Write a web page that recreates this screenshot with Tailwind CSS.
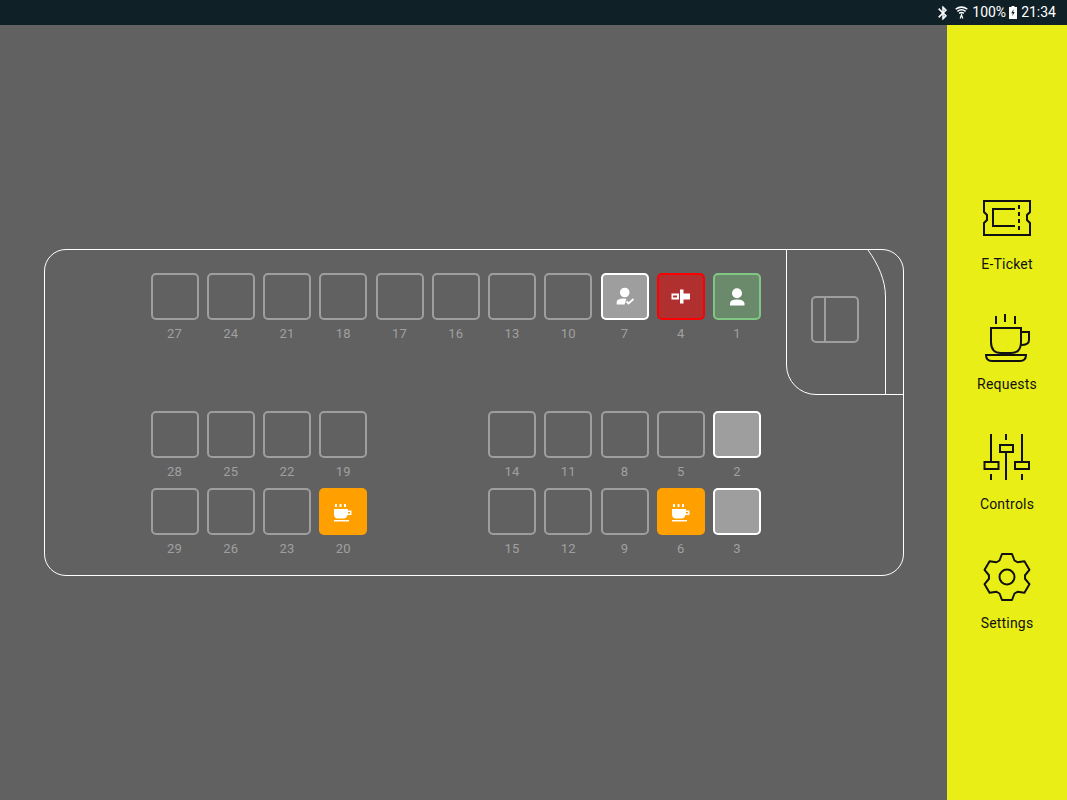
<!DOCTYPE html>
<html lang="en">
<head>
    <meta charset="UTF-8">
    <title>Coach seats</title>
    <script src="https://cdn.jsdelivr.net/npm/@tailwindcss/browser@4"></script>
</head>
<body class="bg-[#616161] font-['Roboto',sans-serif] overflow-hidden">
    <div class="flex flex-col w-[1067px] h-[800px]">
        <!-- Status bar -->
        <div class="h-[25px] bg-[#102027] flex items-center justify-end text-white text-[14px] pr-[11px]">
            <svg class="w-4 h-4 mr-[4px]" viewBox="0 0 24 24" fill="#fff" stroke="#fff" stroke-width="0.6"><path d="M17.71 7.71L12 2h-1v7.59L6.41 5 5 6.41 10.59 12 5 17.59 6.41 19 11 14.41V22h1l5.71-5.71-4.3-4.29 4.3-4.29zM13 5.83l1.88 1.88L13 9.59V5.83zm1.88 10.46L13 18.17v-3.76l1.88 1.88z"/></svg>
            <svg class="w-[13px] h-[13px] mr-[4px]" viewBox="0 0 13 13" fill="none" stroke="#fff" stroke-width="1.6"><path d="M0.7 3.2Q6.5 -1 12.3 3.2"/><path d="M2.4 5.4Q6.5 2.2 10.6 5.4"/><path d="M4.1 7.4Q6.5 5.6 8.9 7.4"/><path d="M5.2 12.5L6.5 8.8L7.8 12.5" stroke-width="1.2"/></svg>
            <span class="mr-[3px]">100%</span>
            <svg class="w-2 h-[13px] mr-[4px]" viewBox="0 0 8 13"><path fill="#fff" d="M2.5 0h3v1H8v12H0V1h2.5z"/><path fill="#102027" d="M4.6 3L2.3 7.3h1.5L3.3 10.3l2.4-4.3H4.2z"/></svg>
            <span>21:34</span>
        </div>

        <div class="flex flex-1 min-h-0">
            <!-- Coach -->
            <div class="flex-1 flex items-center justify-center">
                <div class="relative w-[860px] h-[327px] border border-white rounded-[22px] pt-[23px] pl-[106px]">
                    <div id="seats" class="grid grid-cols-[repeat(11,48px)] grid-rows-[138px_77px_auto] gap-x-[8.25px]"></div>
                    <svg class="absolute top-0 right-0 w-[117px] h-[146px]" viewBox="0 0 117 146" fill="none">
                        <path d="M0.5 0V115A29.5 29.5 0 0 0 30 144.5H117" stroke="#fff"/>
                        <path d="M99.5 144.5V47C99.5 30 92 14 82 0" stroke="#fff"/>
                        <rect x="26" y="47" width="46" height="45" rx="4" stroke="#9e9e9e" stroke-width="2"/>
                        <path d="M39 47V92" stroke="#9e9e9e" stroke-width="2"/>
                    </svg>
                </div>
            </div>

            <!-- Side menu -->
            <div class="w-[120px] bg-[#e9ef16] pt-[169px] text-[14px] leading-5 tracking-[0.2px] text-[#111]">
                <div class="h-[120px] flex flex-col items-center">
                    <svg class="w-12 h-12 overflow-visible" viewBox="0 0 48 48" fill="none" stroke="#111" stroke-width="2"><path d="M1 7H47V18L44 21V26L47 29V41H1V29L4 26V21L1 18Z"/><path d="M32 15H10V32H32"/><path d="M36 11V36" stroke-dasharray="4 3"/></svg>
                    <span class="mt-3">E-Ticket</span>
                </div>
                <div class="h-[120px] flex flex-col items-center">
                    <svg class="w-12 h-12 overflow-visible" viewBox="0 0 48 48" fill="none" stroke="#111" stroke-width="2"><path d="M8 14H38V28Q38 39 28 39H18Q8 39 8 28Z"/><path d="M38 18H46V26Q46 31 38 31"/><path d="M3 41H43Q43 47 37 47H9Q3 47 3 41Z"/><path d="M13 2V10M22 0V8M32 2V10"/></svg>
                    <span class="mt-3">Requests</span>
                </div>
                <div class="h-[120px] flex flex-col items-center">
                    <svg class="w-12 h-12 overflow-visible" viewBox="0 1 48 48" fill="none" stroke="#111" stroke-width="2"><path d="M8 1V29M8 41V47M23 1V7M23 19V47M39 1V29M39 41V47"/><rect x="1.5" y="29" width="14" height="7"/><rect x="17" y="12" width="13" height="7"/><rect x="32" y="29" width="14" height="7"/></svg>
                    <span class="mt-3">Controls</span>
                </div>
                <div class="h-[120px] flex flex-col items-center">
                    <svg class="w-12 h-12 overflow-visible" viewBox="0 1 48 48" fill="none" stroke="#111" stroke-width="2" stroke-linejoin="round"><path d="M16.5 7.5L19 1H29L31.5 7.5L34.54 9.25L41.42 8.17L46.42 16.83L42.04 22.25V25.75L46.42 31.17L41.42 39.83L34.54 38.75L31.5 40.5L29 47H19L16.5 40.5L13.46 38.75L6.58 39.83L1.58 31.17L5.96 25.75V22.25L1.58 16.83L6.58 8.17L13.46 9.25Z"/><circle cx="24" cy="24" r="7.5"/></svg>
                    <span class="mt-[11px]">Settings</span>
                </div>
            </div>
        </div>
    </div>

    <script>
        const icons = {
            person: '<svg class="w-[20px] h-[20px]" viewBox="0 0 20 20" fill="#fff"><circle cx="10" cy="6.2" r="5"/><path d="M3 18.5V16.5Q3 12.5 10 12.5T17.5 16.5V18.5Z"/></svg>',
            checked: '<svg class="w-[20px] h-[20px]" viewBox="0 0 20 20" fill="#fff"><circle cx="9.7" cy="5.5" r="4.8"/><path d="M1.7 17.5V15Q1.7 11.5 9 11.5L11.5 12L9.5 17.5Z"/><path d="M11.5 14.5L13.5 16.5L18.5 12" fill="none" stroke="#fff" stroke-width="1.8"/></svg>',
            broken: '<svg class="w-[20px] h-[20px]" viewBox="0 0 20 20"><path fill="#fff" fill-rule="evenodd" d="M0.5 6.5H8V12.5H0.5ZM2 8.5V10.5H6V8.5Z"/><path fill="#fff" d="M9 2.5H12.5V6.5H19V12.5H12.5V16.5H9Z"/></svg>',
            coffee: '<svg class="w-[20px] h-[20px]" viewBox="0 0 20 20" fill="#fff"><path d="M2 2H4V5H2ZM6.5 2H8.5V5H6.5ZM11 2H13V5H11Z"/><path d="M1 7H15V8.5H18.5V13H14.5Q13.5 16.5 10.5 16.5H5Q1 16.5 1 12Z"/><path fill="#ffa000" d="M15 10H17V11.5H15Z"/><path d="M1 18H16V19.5H1Z"/></svg>'
        };

        const styles = {
            empty: 'border-2 border-[#9e9e9e]',
            taken: 'border-2 border-white bg-[#9e9e9e]',
            checked: 'border-2 border-white bg-[#9e9e9e]',
            broken: 'border-2 border-[#f00] bg-[#b03030]',
            person: 'border-2 border-[#81c784] bg-[#6b8a6b]',
            coffee: 'bg-[#ffa000]'
        };

        const rows = [
            [27, 24, 21, 18, 17, 16, 13, 10, 7, 4, 1],
            [28, 25, 22, 19, 0, 0, 14, 11, 8, 5, 2],
            [29, 26, 23, 20, 0, 0, 15, 12, 9, 6, 3]
        ];
        const special = { 7: 'checked', 4: 'broken', 1: 'person', 2: 'taken', 3: 'taken', 20: 'coffee', 6: 'coffee' };

        document.getElementById('seats').innerHTML = rows.flat().map(n => {
            if (!n) return '<div></div>';
            const type = special[n] || 'empty';
            return `
                <div class="flex flex-col items-center">
                    <div class="w-12 h-[47px] rounded-[5px] flex items-center justify-center ${styles[type]}">${icons[type] || ''}</div>
                    <span class="mt-[6px] text-[13px] leading-4 tracking-[0.3px] text-[#a0a0a0]">${n}</span>
                </div>`;
        }).join('');
    </script>
</body>
</html>
